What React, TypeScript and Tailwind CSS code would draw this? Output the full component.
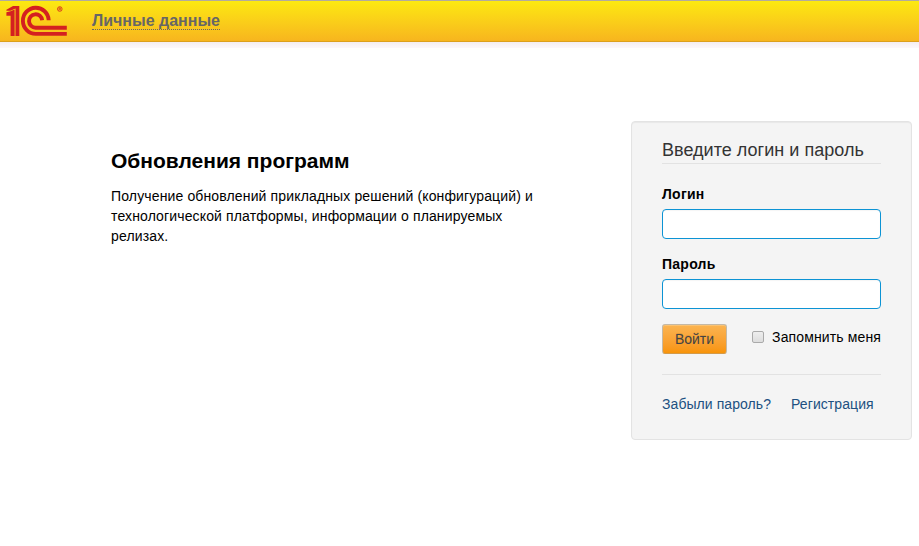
import React from "react";

function Logo() {
  return (
    <svg width="64" height="32" viewBox="5 5 64 32" fill="none" stroke="#d42020" strokeWidth="3.9" role="img" aria-label="1C">
      <path d="M6.4 15.8V12.2L10.6 11.2L14.6 9.6V36H10.6V15.8Z" fill="#d42020" stroke="none" />
      <path d="M6.4 10.8V9.8L13 6H19.3V36H15.5V8.4L10.5 10.8Z" fill="#d42020" stroke="none" />
      <path d="M48.7 20.3A12.9 13.1 0 1 0 35.8 33.9H66.8" />
      <path d="M42.2 20.3A6.6 6.7 0 1 0 35.8 27.7H66.8" />
      <circle cx="59.8" cy="9" r="2.3" strokeWidth="0.8" />
      <path d="M59.1 10.4V7.8H60.4V9H59.1M60 9L60.8 10.4" strokeWidth="0.6" />
    </svg>
  );
}

function Field({ label, type, className }: { label: string; type: string; className: string }) {
  return (
    <label className={`block ${className}`}>
      <span className="block font-bold leading-5 tracking-[0.25px]">{label}</span>
      <input type={type} className="mt-[5px] block h-[30px] w-full rounded-[4px] border border-[#0c93d4] bg-white px-2 shadow-[inset_0_1px_1px_rgba(0,0,0,0.04)] outline-none" />
    </label>
  );
}

export default function App() {
  return (
    <div className="h-[546px] w-full overflow-hidden bg-white font-['Liberation_Sans',Arial,sans-serif] text-sm leading-5 text-black">
      <header className="h-[42px] border-t border-b border-t-[#b3ab9c] border-b-[#dca01c] bg-linear-to-b from-[#fce910] to-[#f7b51e]">
        <div className="flex items-start pt-1 pl-[5px]">
          <Logo />
          <a href="#" className="mt-[6px] ml-[23px] h-[19px] border-b border-dotted border-[#666] text-base leading-5 font-bold text-[#666]">Личные данные</a>
        </div>
      </header>
      <div className="h-[6px] bg-linear-to-b from-[#f4eef1] to-[#fdf8fb]" />
      <main className="flex items-start justify-between pt-[73px] pr-[7px] pl-[111px]">
        <section className="w-[440px] pt-[28px]">
          <h1 className="text-[21px] leading-6 font-bold">Обновления программ</h1>
          <p className="mt-[13px] tracking-[0.14px]">
            Получение обновлений прикладных решений (конфигураций) и технологической платформы, информации о планируемых релизах.
          </p>
        </section>
        <form className="h-[319px] w-[281px] rounded-[4px] border border-[#e3e3e3] bg-[#f4f4f4] px-[30px] shadow-[inset_0_1px_1px_rgba(0,0,0,0.05)]">
          <h2 className="mt-[14px] h-[28px] border-b border-[#e2e2e2] text-[18px] leading-7 tracking-[0.03px] text-[#333]">Введите логин и пароль</h2>
          <Field label="Логин" type="text" className="mt-5" />
          <Field label="Пароль" type="password" className="mt-[15px]" />
          <div className="mt-[15px] flex items-start justify-between">
            <button type="button" className="h-[30px] w-[65px] rounded-[3px] border border-[#c5b9a5] border-b-[#d39a4a] bg-linear-to-b from-[#fbb450] to-[#f89406] text-[#444] shadow-[inset_0_1px_0_rgba(255,255,255,0.2)] [text-shadow:0_-1px_0_rgba(0,0,0,0.1)]">Войти</button>
            <label className="flex pt-[3px] tracking-[0.13px]">
              <input type="checkbox" className="mt-1 mr-2 h-3 w-3 appearance-none rounded-[2px] border border-[#aaa] bg-linear-to-b from-[#eee] to-[#ddd]" />
              Запомнить меня
            </label>
          </div>
          <div className="mt-5 flex gap-5 border-t border-[#e2e2e2] pt-[19px] tracking-[0.07px] text-[#205081]">
            <a href="#">Забыли пароль?</a>
            <a href="#">Регистрация</a>
          </div>
        </form>
      </main>
    </div>
  );
}
